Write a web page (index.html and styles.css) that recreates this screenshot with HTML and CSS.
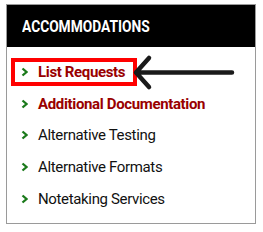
FILE: index.html
```html
<!DOCTYPE html>
<html lang="en">
<head>
    <meta charset="UTF-8">
    <meta name="viewport" content="width=device-width, initial-scale=1.0">
    <title>Accommodations</title>
    <link rel="stylesheet" href="styles.css">
</head>
<body>

<div class="sidebar">
    <h2 class="sidebar-title"><span class="title-text">ACCOMMODATIONS</span></h2>
    <ul class="menu">
        <li class="menu-item"><a class="menu-link active highlight" href="#"><svg class="chev" width="7" height="10" viewBox="0 0 7 10"><polyline points="1.5,1.5 5.5,5 1.5,8.5"/></svg>List Requests</a></li>
        <li class="menu-item"><a class="menu-link active" href="#"><svg class="chev" width="7" height="10" viewBox="0 0 7 10"><polyline points="1.5,1.5 5.5,5 1.5,8.5"/></svg>Additional Documentation</a></li>
        <li class="menu-item"><a class="menu-link" href="#"><svg class="chev" width="7" height="10" viewBox="0 0 7 10"><polyline points="1.5,1.5 5.5,5 1.5,8.5"/></svg>Alternative Testing</a></li>
        <li class="menu-item"><a class="menu-link" href="#"><svg class="chev" width="7" height="10" viewBox="0 0 7 10"><polyline points="1.5,1.5 5.5,5 1.5,8.5"/></svg>Alternative Formats</a></li>
        <li class="menu-item"><a class="menu-link" href="#"><svg class="chev" width="7" height="10" viewBox="0 0 7 10"><polyline points="1.5,1.5 5.5,5 1.5,8.5"/></svg>Notetaking Services</a></li>
    </ul>

    <!-- annotation arrow pointing at the first link -->
    <svg class="pointer" width="110" height="40" viewBox="0 0 110 40">
        <path d="M4,18.5 L100,18.5 M17,4 L4,18.5 L17,33"/>
    </svg>
</div>

</body>
</html>
```

FILE: styles.css
```css
body {
    margin: 0;
    padding: 4px 0 0 6px;
    font-family: Roboto, "Liberation Sans", Arial, sans-serif;
    background-color: #fff;
}
.sidebar {
    position: relative;
    width: 248px;
    border: 1px solid #9a9a9a;
}
.sidebar-title {
    margin: 0;
    height: 42px;
    line-height: 43px;
    padding-left: 15px;
    background-color: #000;
    color: #fff;
    font-size: 16px;
    font-weight: 700;
}
.title-text {
    display: inline-block;
    transform: scaleX(0.86);
    transform-origin: left center;
}
.menu {
    list-style: none;
    margin: 0;
    padding: 9.5px 0 8.5px 0;
}
.menu-item {
    height: 31.6px;
    display: flex;
    align-items: center;
}
.menu-link {
    display: flex;
    align-items: center;
    height: 20px;
    margin-left: 4px;
    padding: 0 8px 0 6px;
    border: 4px solid transparent;
    color: #111;
    font-size: 15px;
    letter-spacing: -0.35px;
    text-decoration: none;
}
.menu-link.active {
    color: #990000;
    font-weight: 700;
}
.menu-link.highlight {
    border-color: #ff0000;
}
.chev {
    margin-right: 10px;
    fill: none;
    stroke: #1b7a1b;
    stroke-width: 2.3;
}
.pointer {
    position: absolute;
    left: 125px;
    top: 49px;
    fill: none;
    stroke: #1a1a1a;
    stroke-width: 4.5;
    stroke-linecap: round;
    stroke-linejoin: round;
}
```
